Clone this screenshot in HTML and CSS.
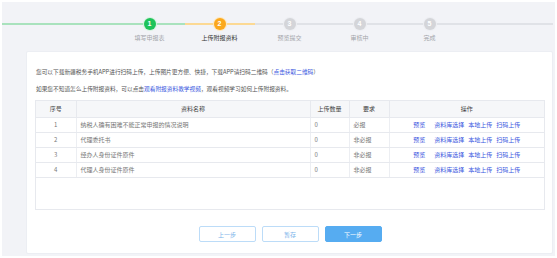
FILE: index.html
```html
<!DOCTYPE html>
<html lang="zh-CN">
<head>
<meta charset="utf-8">
<title>上传附报资料</title>
<link rel="stylesheet" href="styles.css">
</head>
<body>
<div class="page">
  <div class="stepbar">
    <div class="step done"><span class="dot">1</span><span class="label">填写申报表</span></div>
    <div class="step active"><span class="dot">2</span><span class="label">上传附报资料</span></div>
    <div class="step"><span class="dot">3</span><span class="label">预览提交</span></div>
    <div class="step"><span class="dot">4</span><span class="label">审核中</span></div>
    <div class="step"><span class="dot">5</span><span class="label">完成</span></div>
  </div>
  <div class="card">
    <p class="tip">您可以下载新疆税务手机APP进行扫码上传，上传图片更方便、快捷，下载APP请扫码二维码（<a class="link">点击获取二维码</a>）</p>
    <p class="tip">如果您不知道怎么上传附报资料，可以点击<a class="link">观看附报资料教学视频</a>，观看视频学习如何上传附报资料。</p>
    <div class="tablebox">
      <table class="grid">
        <colgroup>
          <col class="c1"><col class="c2"><col class="c3"><col class="c4"><col class="c5">
        </colgroup>
        <thead>
          <tr><th>序号</th><th>资料名称</th><th>上传数量</th><th>要求</th><th>操作</th></tr>
        </thead>
        <tbody>
          <tr><td class="num">1</td><td>纳税人确有困难不能正常申报的情况说明</td><td>0</td><td>必报</td><td class="ops"><a class="op first">预览</a><a class="op">资料库选择</a><a class="op">本地上传</a><a class="op">扫码上传</a></td></tr>
          <tr><td class="num">2</td><td>代理委托书</td><td>0</td><td>非必报</td><td class="ops"><a class="op first">预览</a><a class="op">资料库选择</a><a class="op">本地上传</a><a class="op">扫码上传</a></td></tr>
          <tr><td class="num">3</td><td>经办人身份证件原件</td><td>0</td><td>非必报</td><td class="ops"><a class="op first">预览</a><a class="op">资料库选择</a><a class="op">本地上传</a><a class="op">扫码上传</a></td></tr>
          <tr><td class="num">4</td><td>代理人身份证件原件</td><td>0</td><td>非必报</td><td class="ops"><a class="op first">预览</a><a class="op">资料库选择</a><a class="op">本地上传</a><a class="op">扫码上传</a></td></tr>
        </tbody>
      </table>
    </div>
    <div class="actions">
      <button class="btn">上一步</button>
      <button class="btn">暂存</button>
      <button class="btn primary">下一步</button>
    </div>
  </div>
</div>
</body>
</html>
```
FILE: styles.css
```css
* { box-sizing: border-box; }
html, body { margin: 0; padding: 0; background: #ffffff; }
body {
  font-family: "Noto Sans CJK SC", "Noto Sans", sans-serif;
  font-size: 6px;
  color: #555;
}
.page {
  margin: 2px;
  height: 254px;
  background: #f2f3f7;
  padding: 0 2px 2px 0;
  display: flex;
  flex-direction: column;
}
.stepbar {
  height: 49px;
  flex: none;
  padding: 0 0 0 24px;
  display: flex;
  justify-content: center;
  background: linear-gradient(to right, #a9e2bd 0, #a9e2bd 183px, #fcd994 183px, #fcd994 253px, #e0e2e7 253px) no-repeat 0 21px / 100% 2px;
}
.step {
  width: 70px;
  display: flex;
  flex-direction: column;
  align-items: center;
  padding-top: 16px;
}
.dot {
  width: 12px;
  height: 12px;
  border-radius: 50%;
  background: #d4d5d9;
  color: #fff;
  font-family: "Liberation Sans", sans-serif;
  font-size: 7px;
  font-weight: bold;
  line-height: 12px;
  text-align: center;
  box-shadow: 0 0 0 1px #eceef2;
}
.step.done .dot { background: #1fc35a; box-shadow: 0 0 0 1px #d6f2df; }
.step.active .dot { background: #fba81c; box-shadow: 0 0 0 1px #fde7bd; }
.label {
  margin-top: 4px;
  line-height: 8px;
  color: #a3a5aa;
  white-space: nowrap;
}
.step.active .label { color: #333; }
.card {
  flex: 1;
  margin-left: 24px;
  background: #fff;
  border: 1px solid #eceef3;
  border-radius: 2px;
  padding: 14px 7px 0 8px;
  display: flex;
  flex-direction: column;
}
.tip {
  margin: 0 0 5px 1px;
  font-size: 5.7px;
  line-height: 12px;
  color: #555;
  white-space: nowrap;
}
.link { color: #3a57e0; }
.tablebox {
  height: 110px;
  border: 1px solid #e7e9ee;
  flex: none;
}
.grid {
  width: 100%;
  border-collapse: collapse;
  table-layout: fixed;
}
.c1 { width: 40px; }
.c2 { width: 234px; }
.c3 { width: 39px; }
.c4 { width: 40px; }
.c5 { width: auto; }
.grid th {
  height: 16px;
  background: #f6f7f9;
  font-weight: normal;
  color: #444;
  text-align: center;
  border-right: 1px solid #e7e9ee;
  border-bottom: 1px solid #e7e9ee;
  padding: 0;
}
.grid td {
  height: 15px;
  padding: 0 0 0 4px;
  color: #777;
  border-right: 1px solid #eceef2;
  border-bottom: 1px solid #e7e9ee;
  white-space: nowrap;
}
.grid th:last-child, .grid td:last-child { border-right: none; }
.grid td.num { text-align: center; padding: 0; }
.grid td.ops { text-align: center; padding: 0; }
.op { color: #3a57e0; margin-left: 4px; }
.op.first { margin-left: 0; margin-right: 5px; }
.actions {
  margin-top: 16px;
  display: flex;
  justify-content: center;
  gap: 6px;
}
.btn {
  width: 57px;
  height: 16px;
  padding: 0;
  font-family: inherit;
  font-size: 6px;
  border: 1px solid #bcdcf8;
  background: #fff;
  color: #7cb4ea;
  border-radius: 2px;
}
.btn.primary {
  background: #56acf1;
  border-color: #56acf1;
  color: #fff;
}
```
